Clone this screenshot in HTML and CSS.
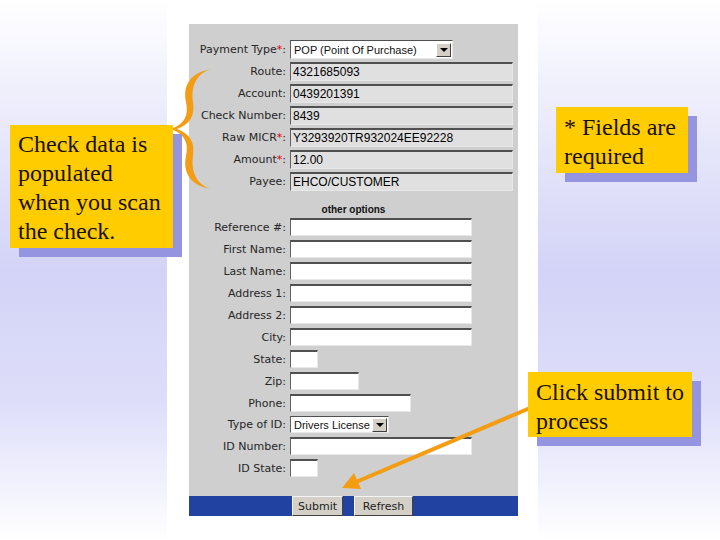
FILE: index.html
```html
<!DOCTYPE html>
<html>
	<head>
		<meta charset="UTF-8">
		<title>Check Payment</title>
		<link rel="stylesheet" href="styles.css">
	</head>
	<body>
		<div class="slide">
			<div class="shot">
				<div class="panel">
					<div class="fields top">
						<label>Payment Type<span class="req">*</span>:</label>
						<div class="select w-pay">
							<span class="select-text">POP (Point Of Purchase)</span>
							<span class="select-btn"></span>
						</div>

						<label>Route:</label>
						<input class="field filled" value="4321685093" readonly>
						<label>Account:</label>
						<input class="field filled" value="0439201391" readonly>
						<label>Check Number:</label>
						<input class="field filled" value="8439" readonly>
						<label>Raw MICR<span class="req">*</span>:</label>
						<input class="field filled" value="Y3293920TR932024EE92228" readonly>
						<label>Amount<span class="req">*</span>:</label>
						<input class="field filled" value="12.00" readonly>
						<label>Payee:</label>
						<input class="field filled" value="EHCO/CUSTOMER" readonly>
					</div>

					<div class="subhead">other options</div>

					<div class="fields rest">
						<label>Reference #:</label>
						<input class="field w-long">
						<label>First Name:</label>
						<input class="field w-long">
						<label>Last Name:</label>
						<input class="field w-long">
						<label>Address 1:</label>
						<input class="field w-long">
						<label>Address 2:</label>
						<input class="field w-long">
						<label>City:</label>
						<input class="field w-long">
						<label>State:</label>
						<input class="field w-tiny">
						<label>Zip:</label>
						<input class="field w-zip">
						<label>Phone:</label>
						<input class="field w-phone">
						<label>Type of ID:</label>
						<div class="select w-id">
							<span class="select-text">Drivers License</span>
							<span class="select-btn"></span>
						</div>
						<label>ID Number:</label>
						<input class="field w-long">
						<label>ID State:</label>
						<input class="field w-tiny">
					</div>
				</div>
				<div class="bar">
					<button class="btn btn-submit">Submit</button>
					<button class="btn btn-refresh">Refresh</button>
				</div>
			</div>

			<!-- brace and arrow drawn over the screenshot -->
			<svg class="marks" width="720" height="540" viewBox="0 0 720 540">
				<path fill="#f49c12" d="M 211 69 C 188 73, 183 88, 186 102 C 189 116, 184 124, 171 129 C 184 134, 189 142, 186 156 C 183 170, 188 185, 211 189 C 195 184, 191 170, 193 156 C 195 142, 190 134, 177 129 C 190 124, 195 116, 193 102 C 191 88, 195 74, 211 69 Z"/>
				<line x1="530" y1="408" x2="356" y2="482" stroke="#f49c12" stroke-width="4" stroke-linecap="round"/>
				<polygon fill="#f49c12" points="342,488 361,489 354,473"/>
			</svg>

			<div class="note note-scan">Check data is<br>populated<br>when you scan<br>the check.</div>
			<div class="note note-req">* Fields are<br>required</div>
			<div class="note note-submit">Click submit to<br>process</div>
		</div>
	</body>
</html>
```
FILE: styles.css
```css
body {
	margin: 0;
}

.slide {
	position: relative;
	width: 720px;
	height: 540px;
	overflow: hidden;
	background: linear-gradient(to bottom, #ffffff 0%, #eeeefc 18%, #d3d3f7 50%, #dedefa 75%, #ffffff 100%);
}

/* the pasted screenshot of the form */
.shot {
	margin-left: 167px;
	width: 371px;
	height: 540px;
	padding: 24px 20px 0 22px;
	box-sizing: border-box;
	background: #ffffff;
}

.panel {
	height: 472px;
	padding-top: 16px;
	box-sizing: border-box;
	background: #cfcfcf;
}

.fields {
	display: grid;
	grid-template-columns: 97px 1fr;
	column-gap: 4px;
	align-items: center;
	padding-right: 5px;
}

.fields.top {
	row-gap: 3px;
}

.fields.rest {
	row-gap: 4px;
}

.fields label {
	text-align: right;
	font-family: "DejaVu Sans", sans-serif;
	font-size: 11px;
	color: #262626;
	white-space: nowrap;
}

.req {
	color: #e00000;
}

.field {
	box-sizing: border-box;
	height: 18px;
	margin: 0;
	padding: 0 2px;
	border-top: 2px solid #505050;
	border-left: 1px solid #606060;
	border-right: 1px solid #e8e8e8;
	border-bottom: 1px solid #e8e8e8;
	background: #ffffff;
	font-family: "Liberation Sans", sans-serif;
	font-size: 12px;
	color: #000000;
	outline: none;
}

.field.filled {
	width: 100%;
	height: 19px;
	background: #e0e0e0;
}

.w-long { width: 182px; }
.w-tiny { width: 28px; }
.w-zip { width: 69px; }
.w-phone { width: 121px; }

.select {
	display: flex;
	align-items: center;
	box-sizing: border-box;
	border-top: 1px solid #505050;
	border-left: 1px solid #606060;
	border-right: 1px solid #e8e8e8;
	border-bottom: 1px solid #e8e8e8;
	background: #ffffff;
	padding: 0 1px 0 3px;
}

.w-pay {
	width: 163px;
	height: 19px;
}

.w-id {
	width: 99px;
	height: 17px;
}

.select-text {
	flex: 1;
	font-family: "Liberation Sans", sans-serif;
	font-size: 11px;
	color: #111111;
	white-space: nowrap;
	overflow: hidden;
}

.select-btn {
	position: relative;
	width: 13px;
	height: 12px;
	background: #d4d0c8;
	border-top: 1px solid #ffffff;
	border-left: 1px solid #ffffff;
	border-right: 1px solid #404040;
	border-bottom: 1px solid #404040;
}

.select-btn::after {
	content: "";
	position: absolute;
	left: 3px;
	top: 4px;
	border-left: 4px solid transparent;
	border-right: 4px solid transparent;
	border-top: 4px solid #000000;
}

.subhead {
	height: 27px;
	padding-top: 13px;
	box-sizing: border-box;
	line-height: 12px;
	text-align: center;
	font-family: "Liberation Sans", sans-serif;
	font-size: 10px;
	font-weight: bold;
	color: #111111;
}

.bar {
	display: flex;
	gap: 11px;
	height: 20px;
	width: 329px;
	padding-left: 103px;
	box-sizing: border-box;
	background: #2242a2;
}

.btn {
	height: 20px;
	margin: 0;
	padding: 0;
	background: #d4d0c8;
	border-top: 1px solid #f4f4f4;
	border-left: 1px solid #f4f4f4;
	border-right: 1px solid #404040;
	border-bottom: 1px solid #404040;
	font-family: "DejaVu Sans", sans-serif;
	font-size: 11px;
	color: #222222;
}

.btn-submit { width: 51px; }
.btn-refresh { width: 59px; }

.marks {
	position: absolute;
	left: 0;
	top: 0;
	pointer-events: none;
}

/* yellow call-outs with the flat blue drop shadow */
.note {
	position: absolute;
	box-sizing: border-box;
	padding: 6px 8px 0 8px;
	background: #ffcc00;
	box-shadow: 9px 9px 0 #9494e0;
	font-family: "Liberation Serif", serif;
	font-size: 24px;
	line-height: 29px;
	color: #1a1000;
	white-space: nowrap;
}

.note-scan {
	left: 10px;
	top: 125px;
	width: 163px;
	height: 123px;
	padding-top: 5px;
}

.note-req {
	left: 556px;
	top: 107px;
	width: 132px;
	height: 66px;
}

.note-submit {
	left: 528px;
	top: 372px;
	width: 164px;
	height: 65px;
}
```
